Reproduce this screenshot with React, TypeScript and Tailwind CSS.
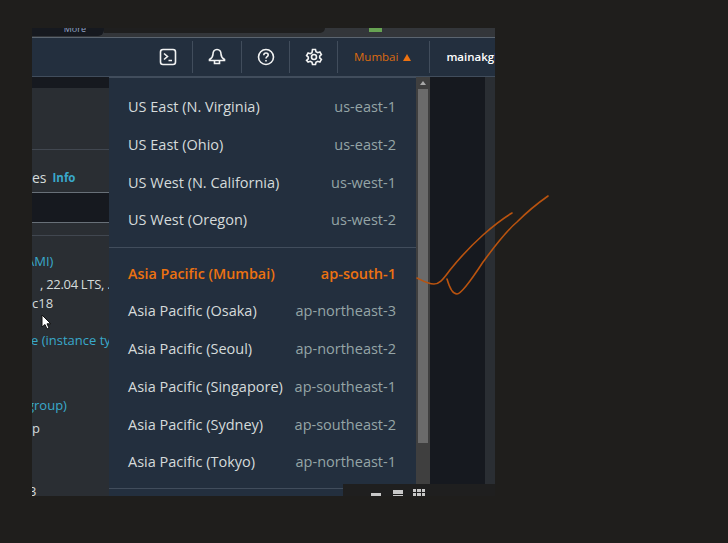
import React from "react";

const font = "font-['Open_Sans','Noto_Sans',sans-serif]";

const topRegions = [
  ["US East (N. Virginia)", "us-east-1"],
  ["US East (Ohio)", "us-east-2"],
  ["US West (N. California)", "us-west-1"],
  ["US West (Oregon)", "us-west-2"],
];

const asiaRegions = [
  ["Asia Pacific (Osaka)", "ap-northeast-3"],
  ["Asia Pacific (Seoul)", "ap-northeast-2"],
  ["Asia Pacific (Singapore)", "ap-southeast-1"],
  ["Asia Pacific (Sydney)", "ap-southeast-2"],
  ["Asia Pacific (Tokyo)", "ap-northeast-1"],
];

const Divider = () => <div className="h-[32px] w-px flex-none bg-[#414d5c]" />;

const RegionRow = ({ name, code, active }: { name: string; code: string; active?: boolean }) => (
  <div className="flex h-[37.75px] items-center justify-between pl-[19px] pr-[20px]">
    <span className={active ? "text-[14.3px] font-semibold text-[#ec7211]" : "text-[14.5px] font-medium text-[#d5dbdb]"}>{name}</span>
    <span className={active ? "text-[14.5px] font-semibold text-[#ec7211]" : "text-[14.5px] text-[#95a5a6]"}>{code}</span>
  </div>
);

const App = () => {
  return (
    <div className={`${font} h-[543px] w-[728px] overflow-hidden bg-[#1f1e1c] pl-[32px] pt-[28px]`}>
      <div className="relative flex h-[468px] w-[463px] flex-col overflow-hidden bg-[#2a2e33]">
        <div className="flex h-[9px] flex-none bg-[#33363a]">
          <div className="flex h-[8px] w-[72px] flex-none justify-end overflow-hidden rounded-br-[6px] bg-[#16191f] pr-[18px]">
            <span className="-mt-[5px] text-[9px] leading-[12px] text-[#95a5c6]">More</span>
          </div>
          <div className="h-[5px] w-[221px] flex-none rounded-br-[8px] bg-[#1f1f1f]" />
          <div className="ml-[44px] h-[4px] w-[13px] flex-none bg-[#67a353]" />
        </div>

        <div className="flex h-[40px] flex-none items-center border-y border-t-[#5b6570] border-b-[#414d5c] bg-[#232f3e] text-white">
          <svg className="ml-[127px] flex-none" width="18" height="18" viewBox="0 0 18 18" fill="none" stroke="#f2f3f3" strokeWidth="1.6">
            <rect x="1.5" y="1.5" width="15" height="15" rx="2.5" />
            <path d="M5 5.5 8.500 8.500 5 11.500M9.500 12.500h3.500" />
          </svg>
          <div className="ml-[15px]"><Divider /></div>
          <svg className="ml-[15px] flex-none" width="18" height="18" viewBox="0 0 18 18" fill="none" stroke="#f2f3f3" strokeWidth="1.6">
            <path d="M9 1.500c-2.600 0-4 2-4 4.500 0 2.500-1 4-3.500 5.500v1h15v-1C14 10 13 8.500 13 6c0-2.500-1.400-4.500-4-4.500Z" />
            <path d="M6.500 13v2.500h5V13" />
          </svg>
          <div className="ml-[15px]"><Divider /></div>
          <svg className="ml-[15px] flex-none" width="18" height="18" viewBox="0 0 18 18" fill="none" stroke="#f2f3f3" strokeWidth="1.6">
            <circle cx="9" cy="9" r="7.500" />
            <path d="M6.800 7.200C6.800 5.800 7.800 5 9 5s2.200.8 2.200 2c0 1.700-2.200 1.700-2.200 3.500" />
            <path d="M9 12v1.500" />
          </svg>
          <div className="ml-[14px]"><Divider /></div>
          <svg className="ml-[15px] flex-none" width="18" height="18" viewBox="0 0 18 18" fill="none" stroke="#f2f3f3" strokeWidth="1.6">
            <circle cx="9" cy="9" r="2.500" />
            <path d="M7.500 1.500h3l.5 2.200 1.700 1 2.200-.7 1.500 2.600-1.700 1.500v1.800l1.700 1.500-1.500 2.600-2.200-.7-1.700 1-.5 2.200h-3l-.5-2.200-1.700-1-2.200.7L1.600 12.400l1.700-1.500V9.100L1.600 7.600l1.500-2.600 2.200.7 1.700-1Z" />
          </svg>
          <div className="ml-[14px]"><Divider /></div>
          <span className="ml-[16px] text-[11.5px] font-medium text-[#dd6b10]">Mumbai</span>
          <span className="ml-[5px] h-0 w-0 flex-none border-x-[4.500px] border-b-[7px] border-x-transparent border-b-[#ec7211]" />
          <div className="ml-[18px]"><Divider /></div>
          <span className="ml-[16px] whitespace-nowrap text-[11.5px] font-semibold text-white">mainakgh</span>
        </div>

        <div className="flex min-h-0 flex-1">
          <div className="flex w-[77px] flex-none flex-col overflow-hidden bg-[#2a2e33] text-[13px] leading-[20px] text-[#d5dbdb]">
            <div className="h-[11px] flex-none bg-[#16191f]" />
            <div className="h-[62px] flex-none border-b border-[#414750]" />
            <div className="flex h-[42px] flex-none items-start whitespace-nowrap pt-[18px]">
              <span className="text-[14px]">es</span>
              <span className="ml-[6px] text-[11.5px] font-bold text-[#39a9cb]">Info</span>
            </div>
            <div className="h-[31px] flex-none border-y border-[#687078] bg-[#16191f]" />
            <div className="h-[13px] flex-none border-b border-[#414750]" />
            <div className="mt-[15px] -ml-[6px] whitespace-nowrap text-[#39a9cb]">AMI)</div>
            <div className="mt-[3px] ml-[8px] whitespace-nowrap tracking-[-0.3px]">, 22.04 LTS, .</div>
            <div className="-mt-px text-[13px]">c18</div>
            <div className="mt-[17px] -ml-px whitespace-nowrap text-[#39a9cb]">e (instance ty</div>
            <div className="mt-[45px] -ml-[5px] whitespace-nowrap text-[#39a9cb]">group)</div>
            <div className="mt-[3px]">p</div>
            <div className="mt-[43px] -ml-[3px]">3</div>
          </div>

          <div className="relative w-[307px] flex-none border-t border-[#414d5c] bg-[#232f3e] pt-[10px]">
            {topRegions.map(([name, code]) => (
              <RegionRow key={code} name={name} code={code} />
            ))}
            <div className="mt-[7.5px] mb-[7px] h-px bg-[#414d5c]" />
            <RegionRow name="Asia Pacific (Mumbai)" code="ap-south-1" active />
            {asiaRegions.map(([name, code]) => (
              <RegionRow key={code} name={name} code={code} />
            ))}
            <div className="mt-[7px] h-px bg-[#414d5c]" />
          </div>

          <div className="flex w-[14px] flex-none flex-col items-center bg-[#3f3f3f]">
            <div className="flex h-[12px] flex-none items-center justify-center">
              <span className="h-0 w-0 border-x-[3.500px] border-b-[4px] border-x-transparent border-b-[#a9a9a9]" />
            </div>
            <div className="h-[354px] w-[10px] flex-none bg-[#6b6b6b]" />
          </div>

          <div className="w-[55px] flex-none bg-[#16191f]" />
          <div className="w-[10px] flex-none bg-[#2a2e33]" />
        </div>

        {/* window snap bar over the bottom edge */}
        <div className="absolute bottom-0 right-0 flex h-[12px] w-[152px] items-end bg-[#1f1f1f] pl-[28px]">
          <span className="h-[3px] w-[10px] flex-none bg-[#c8c8c8]" />
          <span className="ml-[12px] flex h-[6px] w-[10px] flex-none flex-col gap-px">
            <span className="h-[4px] bg-[#c8c8c8]" />
            <span className="h-px bg-[#c8c8c8]" />
          </span>
          <span className="ml-[10px] grid h-[7px] w-[12px] flex-none grid-cols-3 gap-px">
            {[0, 1, 2, 3, 4, 5].map((i) => (
              <span key={i} className="bg-[#c8c8c8]" />
            ))}
          </span>
        </div>

        {/* mouse pointer */}
        <svg className="absolute left-[9px] top-[286px]" width="11" height="17" viewBox="0 0 11 17">
          <path d="M1 1v12l3-2.500 2 4.500 2-1-2-4.200h3.800Z" fill="#fff" stroke="#111" strokeWidth="1" />
        </svg>
      </div>

      {/* pen strokes drawn over the screen */}
      <svg className="absolute left-0 top-0" width="728" height="543" viewBox="0 0 728 543" fill="none" stroke="#b9530f" strokeWidth="1.600" strokeLinecap="round">
        <path d="M417 278C423 281 428 284 434 284C439 284 442 281 450 270C458 260 473 244 483 235C492 227 502 219 512 213" />
        <path d="M447 279C449 286 452 294 457 294C461 294 470 282 483 262C492 250 505 232 517 222C527 212 538 203 548 196" />
      </svg>
    </div>
  );
};

export default App;
